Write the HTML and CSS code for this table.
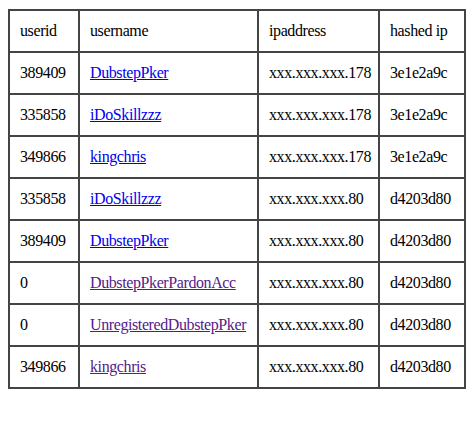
FILE: index.html
```html
<!DOCTYPE html>
<html>
<head>
<meta charset="utf-8">
<link rel="stylesheet" href="styles.css">
</head>
<body>
<table class="ip-table">
  <colgroup>
    <col class="c-id"><col class="c-name"><col class="c-ip"><col class="c-hash">
  </colgroup>
  <tr><td>userid</td><td>username</td><td>ipaddress</td><td>hashed ip</td></tr>
  <tr><td>389409</td><td><a class="link" href="#">DubstepPker</a></td><td>xxx.xxx.xxx.178</td><td>3e1e2a9c</td></tr>
  <tr><td>335858</td><td><a class="link" href="#">iDoSkillzzz</a></td><td>xxx.xxx.xxx.178</td><td>3e1e2a9c</td></tr>
  <tr><td>349866</td><td><a class="link" href="#">kingchris</a></td><td>xxx.xxx.xxx.178</td><td>3e1e2a9c</td></tr>
  <tr><td>335858</td><td><a class="link" href="#">iDoSkillzzz</a></td><td>xxx.xxx.xxx.80</td><td>d4203d80</td></tr>
  <tr><td>389409</td><td><a class="link" href="#">DubstepPker</a></td><td>xxx.xxx.xxx.80</td><td>d4203d80</td></tr>
  <tr><td>0</td><td><a class="link visited" href="#">DubstepPkerPardonAcc</a></td><td>xxx.xxx.xxx.80</td><td>d4203d80</td></tr>
  <tr><td>0</td><td><a class="link visited" href="#">UnregisteredDubstepPker</a></td><td>xxx.xxx.xxx.80</td><td>d4203d80</td></tr>
  <tr><td>349866</td><td><a class="link visited" href="#">kingchris</a></td><td>xxx.xxx.xxx.80</td><td>d4203d80</td></tr>
</table>
</body>
</html>
```

FILE: styles.css
```css
html, body {
  background: #ffffff;
}
body {
  margin: 8px;
  padding-top: 1px;
  font-family: "Liberation Serif", "Times New Roman", serif;
  font-size: 16px;
  color: #000000;
}
.ip-table {
  border-collapse: separate;
  border-spacing: 0;
  border: 1px solid #444444;
  table-layout: fixed;
  width: 458px;
}
.c-id { width: 70px; }
.c-name { width: 179px; }
.c-ip { width: 121px; }
.c-hash { width: 86px; }
.ip-table td {
  border: 1px solid #444444;
  padding: 11px 10px;
  line-height: 18px;
  text-align: left;
  vertical-align: middle;
  white-space: nowrap;
  overflow: hidden;
  letter-spacing: -0.4px;
}
.link {
  color: #0000ee;
  text-decoration: underline;
}
.link.visited {
  color: #551a8b;
}
```
